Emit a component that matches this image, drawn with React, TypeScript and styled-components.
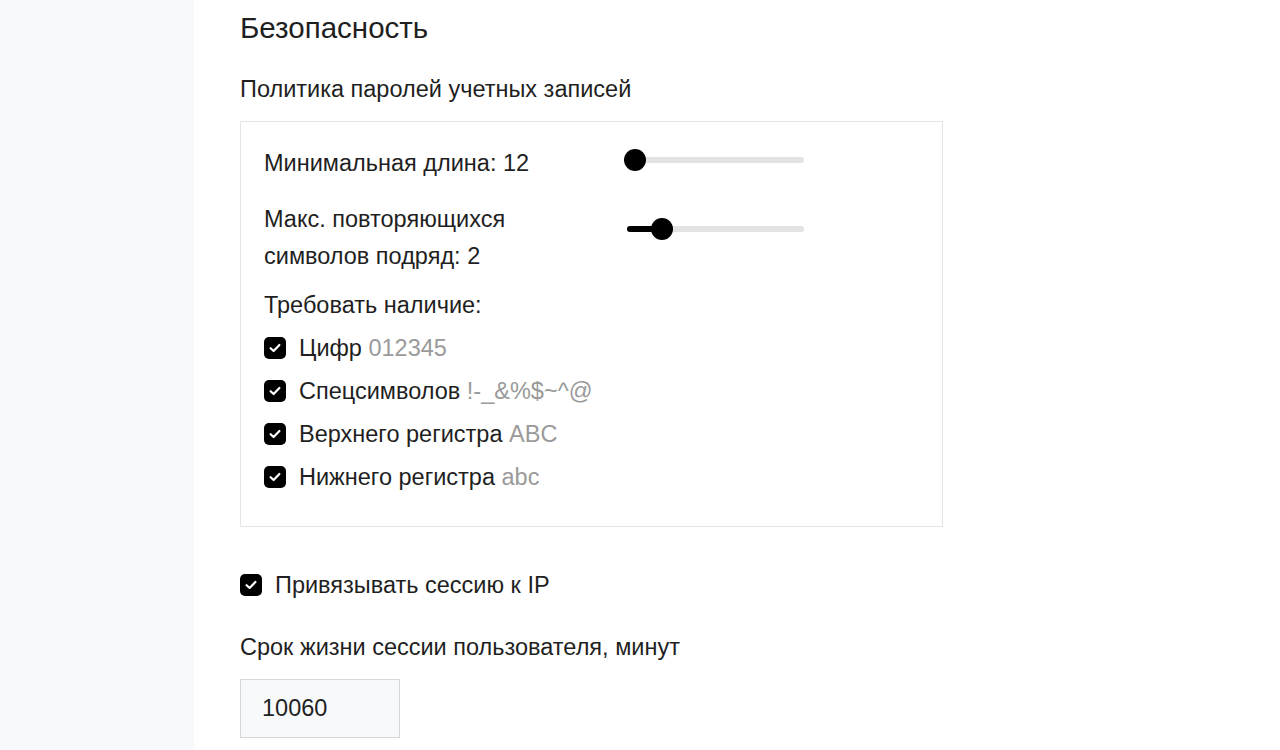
import React from "react";
import styled, { createGlobalStyle } from "styled-components";

const Global = createGlobalStyle`
  html, body { margin: 0; padding: 0; background: #ffffff; }
  body { font-family: "Liberation Sans", Arial, sans-serif; color: #1f1f1f; }
  * { box-sizing: border-box; }
`;

const Layout = styled.div`
  display: flex;
  min-height: 750px;
`;

const Sidebar = styled.aside`
  width: 194px;
  flex: none;
  background: #f8f9fa;
`;

const Main = styled.main`
  flex: 1;
  padding: 10px 0 0 46px;
  display: flex;
  flex-direction: column;
`;

const Title = styled.h1`
  margin: 0;
  font-size: 29.5px;
  font-weight: 400;
  line-height: 36px;
`;

const SubTitle = styled.h2`
  margin: 28px 0 0;
  font-size: 23.5px;
  font-weight: 400;
  line-height: 30px;
`;

const Card = styled.section`
  margin-top: 17px;
  width: 703px;
  border: 1px solid #e4e4e4;
  padding: 23px 23px 35px;
  display: flex;
  flex-direction: column;
`;

const SliderRow = styled.div<{ $gap?: number }>`
  display: flex;
  align-items: flex-start;
  margin-bottom: ${(p) => p.$gap ?? 0}px;
`;

const Label = styled.div`
  width: 330px;
  flex: none;
  font-size: 23.5px;
  line-height: 37px;
`;

const SliderWrap = styled.div<{ $offset: number }>`
  margin-left: 30px;
  margin-top: ${(p) => p.$offset}px;
  width: 180px;
  height: 22px;
  position: relative;
  display: flex;
  align-items: center;
  padding-left: 3px;
`;

const Track = styled.div`
  width: 100%;
  height: 6px;
  border-radius: 3px;
  background: #e3e3e3;
  position: relative;
`;

const Fill = styled.div`
  position: absolute;
  left: 0;
  top: 0;
  height: 6px;
  border-radius: 3px;
  background: #000;
`;

const Thumb = styled.div`
  position: absolute;
  top: 0;
  width: 22px;
  height: 22px;
  border-radius: 50%;
  background: #000;
`;

const Require = styled.div`
  margin-top: 16px;
  font-size: 23.5px;
  line-height: 28px;
`;

const CheckList = styled.div`
  display: flex;
  flex-direction: column;
  gap: 15px;
  margin-top: 15px;
`;

const CheckRow = styled.label`
  display: flex;
  align-items: center;
  gap: 13px;
  font-size: 23.5px;
  line-height: 28px;
`;

const Box = styled.span`
  width: 22px;
  height: 22px;
  border-radius: 5px;
  background: #000;
  display: inline-flex;
  align-items: center;
  justify-content: center;
  flex: none;
`;

const Hint = styled.span`
  color: #9a9a9a;
`;

const IpRow = styled(CheckRow)`
  margin-top: 44px;
`;

const FieldLabel = styled.div`
  margin-top: 34px;
  font-size: 23.5px;
  line-height: 28px;
`;

const Input = styled.div`
  margin-top: 18px;
  width: 160px;
  height: 59px;
  border: 1px solid #d4d7db;
  background: #f7f9fb;
  font-size: 23.5px;
  display: flex;
  align-items: center;
  padding-left: 21px;
`;

const Check = () => (
  <Box>
    <svg width="12" height="10" viewBox="0 0 12 10">
      <path d="M1.6 5.2 L4.6 8 L10.4 2" fill="none" stroke="#fff" strokeWidth="2.2" strokeLinecap="round" strokeLinejoin="round" />
    </svg>
  </Box>
);

const Slider = ({ px, offset }: { px: number; offset: number }) => (
  <SliderWrap $offset={offset}>
    <Track>{px > 0 && <Fill style={{ width: `${px}px` }} />}</Track>
    <Thumb style={{ left: `${px}px` }} />
  </SliderWrap>
);

const items = [
  { t: "Цифр", h: "012345" },
  { t: "Спецсимволов", h: "!-_&%$~^@" },
  { t: "Верхнего регистра", h: "ABC" },
  { t: "Нижнего регистра", h: "abc" },
];

export default function App() {
  return (
    <>
      <Global />
      <Layout>
        <Sidebar />
        <Main>
          <Title>Безопасность</Title>
          <SubTitle>Политика паролей учетных записей</SubTitle>
          <Card>
            <SliderRow $gap={19}>
              <Label>Минимальная длина: 12</Label>
              <Slider px={0} offset={4} />
            </SliderRow>
            <SliderRow>
              <Label>Макс. повторяющихся символов подряд: 2</Label>
              <Slider px={27} offset={17} />
            </SliderRow>
            <Require>Требовать наличие:</Require>
            <CheckList>
              {items.map((i) => (
                <CheckRow key={i.t}>
                  <Check />
                  <span>
                    {i.t} <Hint>{i.h}</Hint>
                  </span>
                </CheckRow>
              ))}
            </CheckList>
          </Card>
          <IpRow>
            <Check />
            <span>Привязывать сессию к IP</span>
          </IpRow>
          <FieldLabel>Срок жизни сессии пользователя, минут</FieldLabel>
          <Input>10060</Input>
        </Main>
      </Layout>
    </>
  );
}
